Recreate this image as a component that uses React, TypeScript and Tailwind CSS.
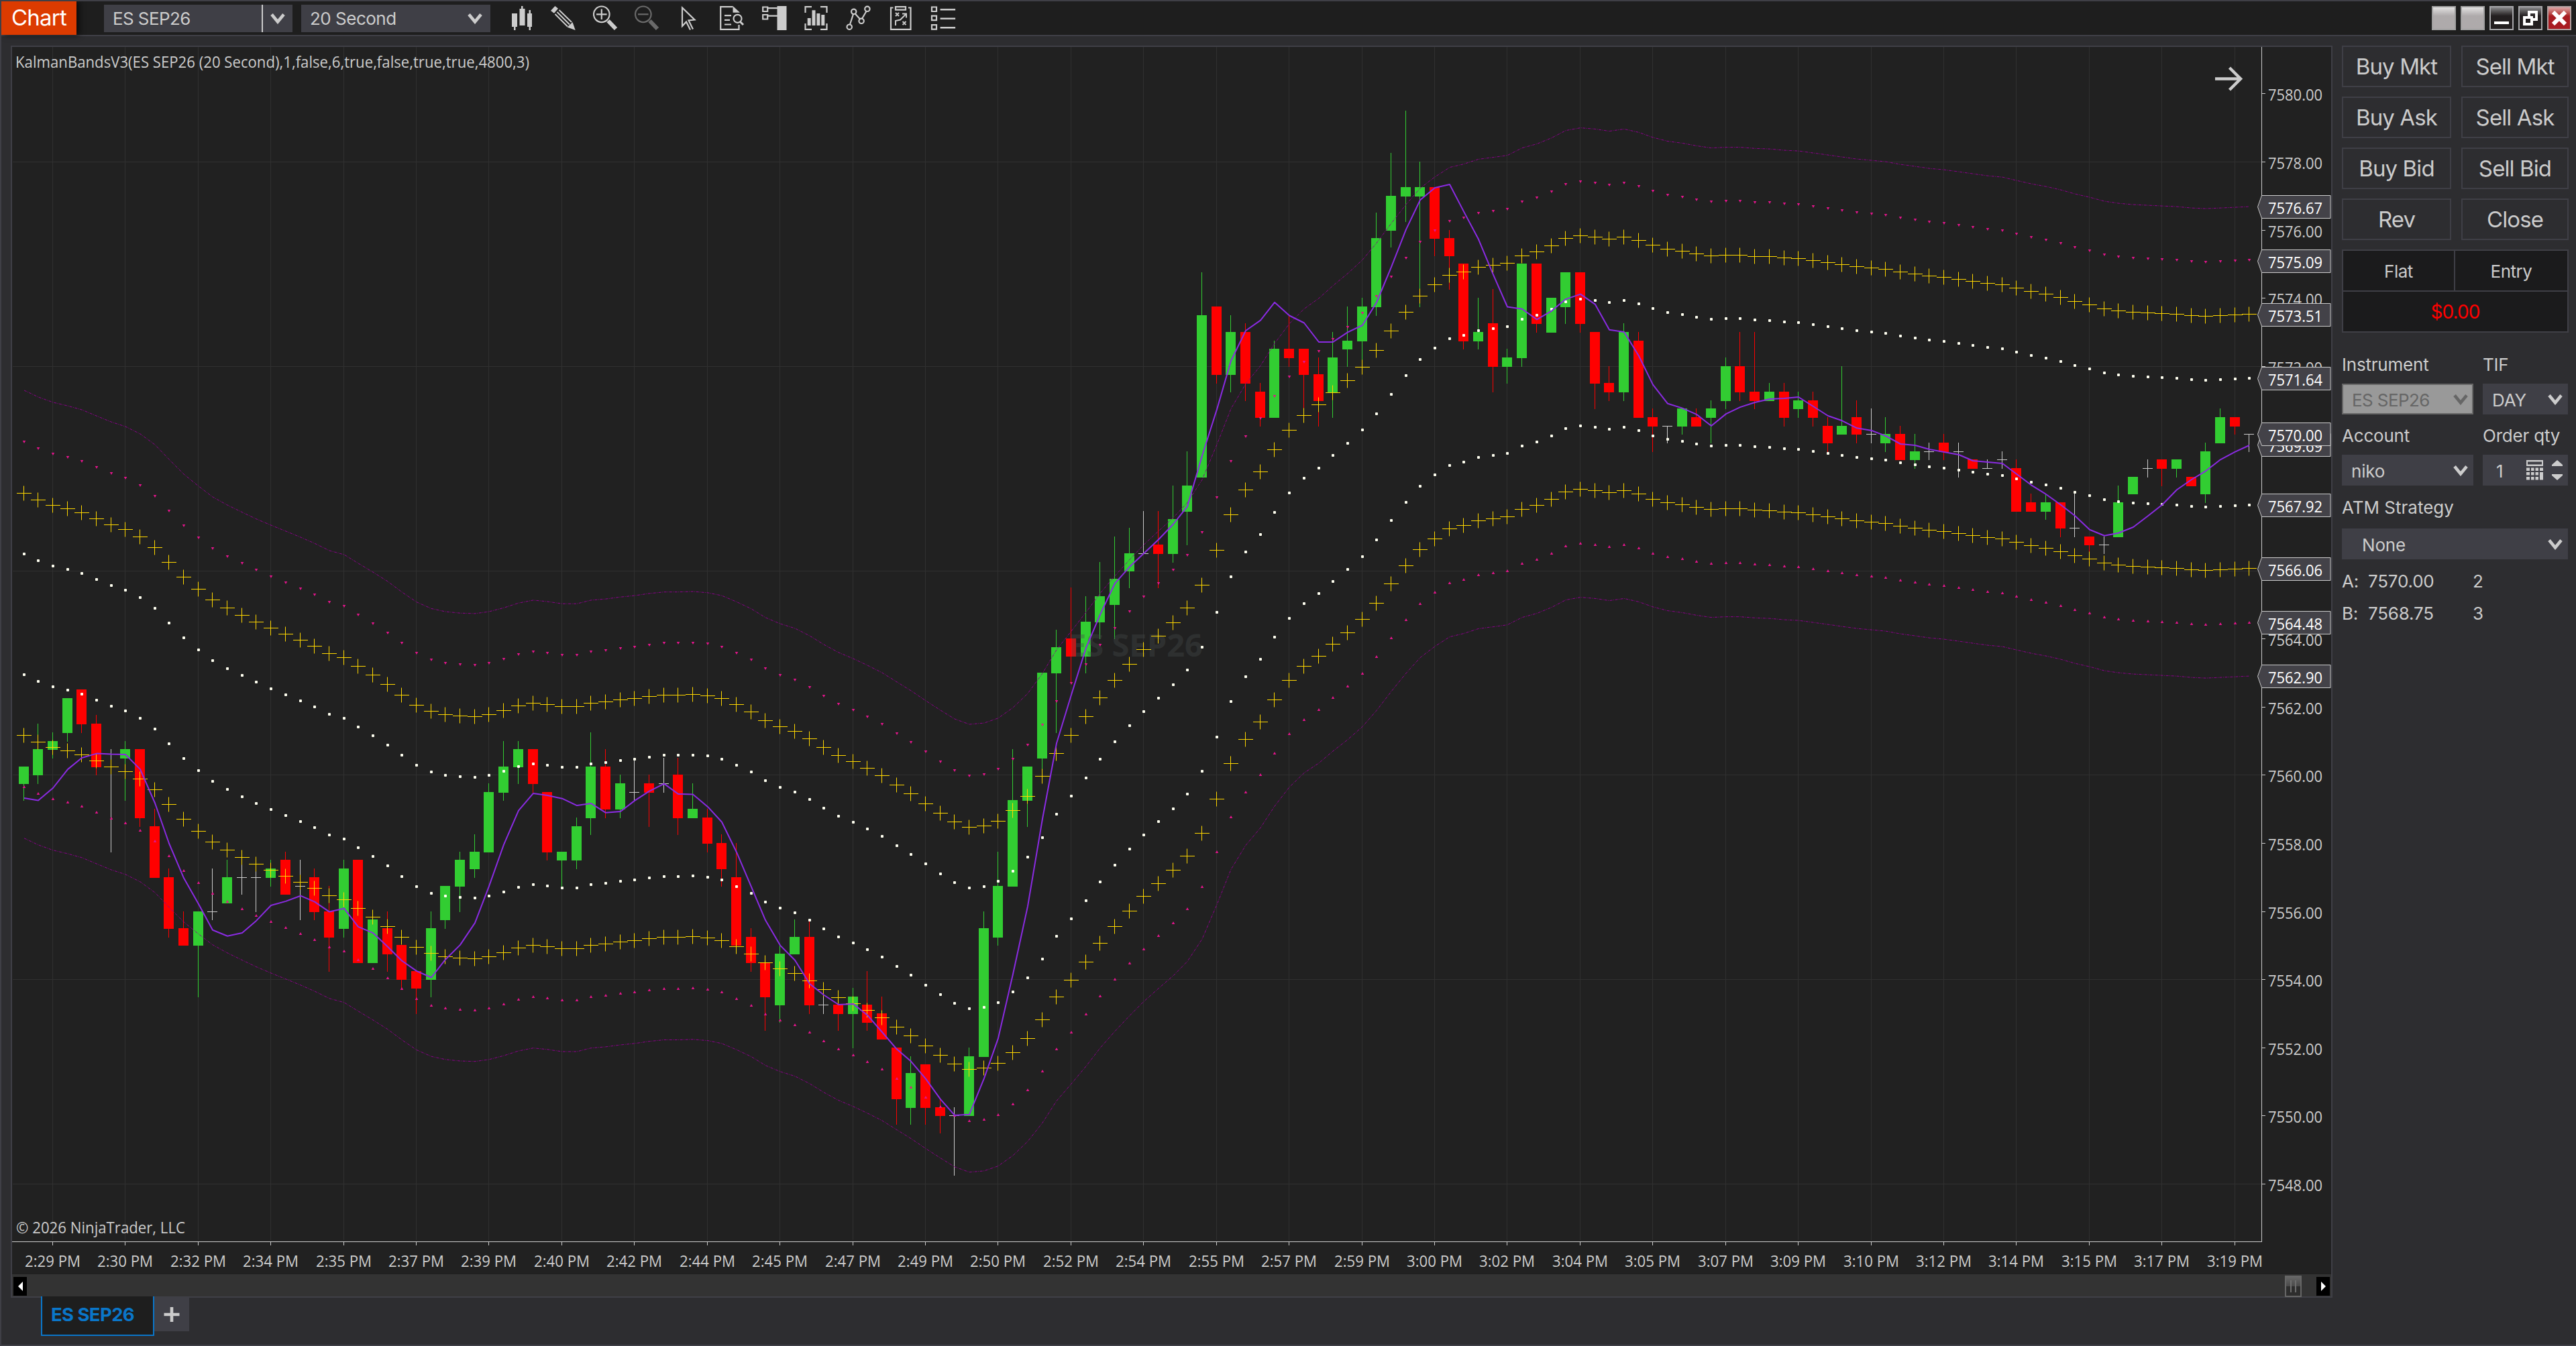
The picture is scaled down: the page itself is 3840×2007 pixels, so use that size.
import React from 'react';

// [direction, body top, body bottom, high, low] in ticks above 7548.00, one tick is 0.25
type Bar = [number, number, number, number, number];

const BARS: Bar[] = [
  [1, 49, 47, 49, 45], [1, 51, 48, 54, 47], [1, 52, 51, 53, 50], [1, 57, 53, 57, 52], [-1, 58, 54, 58, 53],
  [-1, 54, 49, 55, 48], [0, 49, 49, 51, 39], [1, 51, 50, 52, 45], [-1, 51, 43, 51, 42], [-1, 42, 36, 44, 36],
  [-1, 36, 30, 37, 29], [-1, 30, 28, 32, 28], [1, 32, 28, 32, 22], [0, 32, 32, 37, 31], [1, 36, 33, 38, 33],
  [0, 36, 36, 38, 34], [0, 36, 36, 38, 32], [1, 37, 36, 38, 35], [-1, 38, 34, 39, 34], [0, 35, 35, 38, 31],
  [-1, 36, 32, 37, 31], [-1, 32, 29, 35, 25], [1, 37, 30, 38, 29], [-1, 38, 26, 38, 26], [1, 31, 26, 31, 26],
  [-1, 30, 27, 32, 25], [-1, 28, 24, 28, 23], [-1, 25, 23, 25, 20], [1, 30, 24, 32, 22], [1, 35, 31, 35, 30],
  [1, 38, 35, 39, 32], [1, 39, 37, 41, 36], [1, 46, 39, 47, 39], [1, 49, 46, 52, 45], [1, 51, 49, 52, 47],
  [-1, 51, 47, 51, 46], [-1, 46, 39, 46, 38], [1, 39, 38, 39, 35], [1, 42, 38, 43, 37], [1, 49, 43, 53, 41],
  [-1, 49, 44, 51, 43], [1, 47, 44, 48, 43], [0, 46, 46, 50, 45], [-1, 47, 46, 48, 42], [0, 47, 47, 50, 46],
  [-1, 48, 43, 50, 41], [1, 44, 43, 47, 43], [-1, 43, 40, 44, 39], [-1, 40, 37, 41, 35], [-1, 36, 28, 40, 28],
  [-1, 29, 26, 30, 25], [-1, 26, 22, 26, 18], [1, 27, 21, 28, 19], [1, 29, 27, 31, 27], [-1, 29, 21, 31, 20],
  [0, 21, 21, 23, 20], [-1, 21, 20, 21, 18], [1, 22, 20, 23, 16], [-1, 21, 19, 25, 18], [-1, 20, 17, 22, 17],
  [-1, 16, 10, 16, 7], [1, 13, 9, 15, 7], [-1, 14, 9, 14, 7], [-1, 9, 8, 10, 6], [0, 8, 8, 9, 1],
  [1, 15, 8, 16, 8], [1, 30, 15, 32, 15], [1, 35, 29, 39, 28], [1, 45, 35, 51, 35], [1, 49, 45, 49, 42],
  [1, 60, 50, 60, 48], [1, 63, 60, 65, 53], [-1, 64, 62, 70, 59], [1, 66, 62, 69, 60], [1, 69, 66, 73, 64],
  [1, 71, 68, 76, 64], [1, 74, 72, 77, 70], [0, 74, 74, 79, 74], [-1, 75, 74, 79, 70], [1, 78, 74, 82, 73],
  [1, 82, 79, 86, 75], [1, 102, 83, 107, 83], [-1, 103, 95, 103, 94], [1, 100, 95, 102, 93], [-1, 100, 94, 101, 92],
  [-1, 93, 90, 94, 89], [1, 98, 90, 99, 90], [-1, 98, 97, 102, 96], [-1, 98, 95, 98, 91], [-1, 95, 92, 97, 89],
  [1, 97, 93, 100, 90], [1, 99, 98, 103, 96], [1, 103, 99, 104, 96], [1, 111, 103, 114, 102], [1, 116, 112, 121, 110],
  [1, 117, 116, 126, 113], [1, 117, 116, 120, 103], [-1, 117, 111, 117, 109], [-1, 111, 109, 112, 105], [-1, 108, 99, 108, 98],
  [1, 100, 99, 104, 98], [-1, 101, 96, 105, 93], [1, 97, 96, 98, 94], [1, 108, 97, 108, 96], [-1, 108, 101, 108, 100],
  [1, 104, 100, 104, 100], [1, 107, 103, 107, 101], [-1, 107, 101, 107, 100], [-1, 100, 94, 100, 91], [-1, 94, 93, 96, 92],
  [1, 100, 93, 101, 92], [-1, 99, 90, 100, 90], [-1, 90, 89, 91, 86], [0, 89, 89, 89, 87], [1, 91, 89, 91, 88],
  [-1, 90, 89, 91, 89], [1, 91, 90, 92, 87], [1, 96, 92, 97, 91], [-1, 96, 93, 100, 92], [-1, 93, 92, 100, 91],
  [1, 93, 92, 94, 92], [-1, 93, 90, 94, 89], [1, 92, 91, 93, 90], [-1, 92, 90, 93, 89], [-1, 89, 87, 90, 86],
  [1, 89, 88, 96, 88], [-1, 90, 88, 92, 87], [0, 88, 88, 91, 87], [1, 88, 87, 90, 86], [-1, 88, 85, 89, 85],
  [1, 86, 85, 88, 84], [0, 86, 86, 87, 85], [-1, 87, 86, 88, 85], [0, 86, 86, 87, 83], [-1, 85, 84, 85, 84],
  [0, 84, 84, 85, 84], [0, 85, 85, 86, 84], [-1, 84, 79, 85, 79], [-1, 80, 79, 81, 79], [1, 80, 79, 81, 78],
  [-1, 80, 77, 80, 76], [0, 77, 77, 81, 76], [-1, 76, 75, 76, 74], [0, 75, 75, 76, 74], [1, 80, 76, 82, 76],
  [1, 83, 81, 83, 81], [0, 84, 84, 85, 83], [-1, 85, 84, 85, 82], [1, 85, 84, 85, 83], [-1, 83, 82, 83, 82],
  [1, 86, 81, 87, 80], [1, 90, 87, 91, 87], [-1, 90, 89, 90, 88], [0, 88, 88, 88, 86],
];

// center of the bands, in chart pixels
const MID = [
  915.9, 925.9, 933.8, 939.1, 944.9, 954.1, 963.1, 969.9, 980.9, 997, 1018.8, 1040.9, 1058.8, 1074.9, 1087,
  1097.7, 1107.7, 1117, 1125.9, 1134.9, 1144.1, 1154.9, 1160.9, 1173.8, 1187, 1200.9, 1216.6, 1231.6, 1241.3, 1245.9,
  1248.1, 1248.8, 1245.9, 1240.2, 1233.1, 1228.8, 1230.9, 1234.1, 1234.1, 1228.8, 1227, 1224.1, 1222, 1218.8, 1216.6,
  1216.6, 1215.9, 1217.7, 1222, 1231.3, 1241.7, 1254.7, 1263.9, 1270.8, 1281.9, 1294.9, 1306.8, 1316, 1325.9, 1337,
  1350.8, 1363.8, 1378.7, 1392.9, 1405.9, 1413.9, 1412, 1404.7, 1389.1, 1368, 1339.1, 1305.2, 1278.6, 1251.3, 1223.6,
  1198.2, 1174.4, 1152.8, 1132.8, 1113.3, 1091.5, 1057.7, 1005.8, 952.9, 916.4, 889.8, 857.1, 828.2, 806.5, 791.3,
  773, 755.3, 735.5, 710.9, 681.9, 654.4, 630.6, 613.8, 599.6, 594.6, 587.4, 584.6, 581.7, 570.6, 564.6,
  555.6, 544.6, 540.6, 542.4, 545.6, 542.4, 547.4, 554.9, 560.6, 563.5, 567.4, 570.6, 569.6, 569.6, 571.3,
  572.1, 574.1, 575.1, 578.1, 581.1, 584.1, 587.1, 589.1, 591.1, 595.1, 598.1, 601.1, 603.1, 606.1, 609.1,
  612.1, 614.1, 619.1, 624.1, 628.1, 633.1, 639.1, 644.1, 650.1, 653.1, 655.1, 656.1, 657.1, 658.1, 660.1,
  661.1, 660.1, 659.1, 658.1,
];

const KALMAN = [
  1190, 1193.6, 1175, 1147.1, 1130, 1123.6, 1124.6, 1125, 1147.1, 1197.5, 1257.5, 1309.3, 1347.9, 1386.8, 1395.7,
  1391.1, 1372.9, 1350, 1343.9, 1335.7, 1344.6, 1359.6, 1354.6, 1381.8, 1391.1, 1411.8, 1432.5, 1447.9, 1457.5, 1430.7,
  1408.9, 1376.1, 1321.4, 1259.3, 1208.6, 1182.9, 1186.1, 1190.7, 1201.1, 1197.9, 1211.8, 1210, 1193.9, 1179.6, 1168.6,
  1183.9, 1184.6, 1202.9, 1225.7, 1270.7, 1322.4, 1372.1, 1409.6, 1431.8, 1467, 1483.5, 1498, 1496.9, 1513.7, 1539,
  1564.6, 1582.6, 1608.6, 1639.2, 1662.9, 1661.8, 1607.8, 1548.1, 1452.5, 1351.4, 1221, 1108.3, 1036, 965.8, 916.4,
  869.8, 845.1, 825.3, 804.5, 781.5, 755.1, 679.5, 610.4, 538, 493, 477.6, 450.8, 470.5, 481.5, 510,
  510, 495.4, 485, 451, 398.2, 342.1, 298.2, 280, 275, 315.4, 356.8, 409.6, 457.5, 460.7, 476.4,
  463.6, 446.1, 438.6, 453.9, 491.8, 495, 530.7, 573.6, 601.8, 608.6, 617.9, 635, 617.1, 607.1, 600,
  595, 594, 592, 606, 620, 627.3, 638.3, 642, 650, 662, 664, 670, 674, 678, 687,
  689, 691, 706.7, 723.3, 737, 752.7, 769, 789.7, 798.7, 794.7, 786, 769.3, 752.7, 730.3, 715,
  702.3, 685.3, 673.7, 664,
];

const TIMES = [
  '2:29', '2:30', '2:32', '2:34', '2:35', '2:37', '2:39', '2:40', '2:42', '2:44', '2:45',
  '2:47', '2:49', '2:50', '2:52', '2:54', '2:55', '2:57', '2:59', '3:00', '3:02', '3:04',
  '3:05', '3:07', '3:09', '3:10', '3:12', '3:14', '3:15', '3:17', '3:19',
].map((t) => `${t} PM`);

const PRICES = Array.from({ length: 17 }, (_, i) => 7580 - i * 2);
const TAGS = [7576.67, 7575.09, 7573.51, 7571.64, 7569.69, 7570.0, 7567.92, 7566.06, 7564.48, 7562.9];

const AXIS_X = 3371;
const AXIS_Y = 1851;

const barX = (i: number) => Math.floor(35 + 21.686 * i);
const priceY = (p: number) => Math.floor(241.4 + (7578 - p) * 50.805);
const tickY = (t: number) => priceY(7548 + t / 4);

const sigma = (i: number) => {
  if (i < 70) return 90.25;
  if (i < 73) return 90.25 + (i - 69) * 0.32;
  if (i < 96) return 91.5 + (i - 73) * 0.135;
  return 94.6;
};

const band = (k: number) => MID.map((m, i) => m + k * sigma(i));
const linePath = (ys: number[]) => ys.map((y, i) => `${i ? 'L' : 'M'}${barX(i) + 1} ${y.toFixed(1)}`).join('');

const Candle: React.FC<{ bar: Bar; i: number }> = ({ bar, i }) => {
  const [dir, top, bottom, high, low] = bar;
  const x = barX(i);
  const fill = dir > 0 ? '#32cd32' : dir < 0 ? '#ff0000' : '#cccccc';
  return <g fill={fill}>
      <rect x={x} y={tickY(high)} width={1} height={tickY(low) - tickY(high) + 1} />
      <rect x={x - 7} y={tickY(top)} width={15} height={tickY(bottom) - tickY(top) + 1} />
    </g>;
};

const Crosses: React.FC<{ k: number }> = ({ k }) => <path
    stroke="#ffd700"
    strokeWidth={1}
    fill="none"
    d={band(k).map((v, i) => {
      const x = barX(i) + 0.5;
      const y = Math.floor(v) + 0.5;
      return `M${x - 10.5} ${y}h22M${x} ${y - 11}v22`;
    }).join('')}
  />;

const Dots: React.FC<{ k: number }> = ({ k }) => <g fill="#fffff0">
    {band(k).map((v, i) => <rect key={i} x={barX(i) - 1} y={Math.round(v) - 2} width={4} height={4} rx={1} />)}
  </g>;

const Triangles: React.FC<{ k: number }> = ({ k }) => <path
    fill="#e0158a"
    d={band(k).map((v, i) => {
      const x = barX(i) + 1;
      const y = Math.round(v);
      return k < 0 ? `M${x} ${y + 2}l2.3 -4h-4.6z` : `M${x} ${y - 2}l2.3 4h-4.6z`;
    }).join('')}
  />;

const PriceTag: React.FC<{ price: number }> = ({ price }) => {
  const y = priceY(price) + 0.5;
  return <g>
      <path d={`M3365.5 ${y}L3371.5 ${y - 17}H3474V${y + 17}H3371.5Z`} fill="#434248" stroke="#cccccc" />
      <text x={3381} y={y + 10} fill="#ffffff" textLength={81} lengthAdjust="spacingAndGlyphs">
        {price.toFixed(2)}
      </text>
    </g>;
};

const Chart = () => {
  return <svg viewBox="18 70 3457 1829" className="block w-[3457px] h-[1829px] font-['Open_Sans',sans-serif] text-[23.5px]">
      <g fill="#303030">
        {TIMES.map((t, i) => <rect key={t} x={barX(2 + i * 5)} y={70} width={1} height={1779} />)}
        {[7578, 7572, 7566, 7560, 7554, 7548].map((p) => <rect key={p} x={19} y={priceY(p)} width={3351} height={1} />)}
      </g>
      {BARS.map((bar, i) => <Candle key={i} bar={bar} i={i} />)}
      <text x={1593} y={979} fill="#454b4b" fillOpacity={0.4} fontSize={47} fontWeight={700} textLength={200} lengthAdjust="spacingAndGlyphs">
        ES SEP26
      </text>
      <path d={linePath(band(-3.7))} stroke="#8b008b" strokeWidth={1} strokeDasharray="4 1.5 1 1.5" fill="none" />
      <path d={linePath(band(3.7))} stroke="#8b008b" strokeWidth={1} strokeDasharray="4 1.5 1 1.5" fill="none" />
      <Triangles k={-2.85} />
      <Triangles k={2.85} />
      <Crosses k={-2} />
      <Crosses k={2} />
      <Dots k={-1} />
      <Dots k={1} />
      <path d={linePath(KALMAN)} stroke="#8a2be2" strokeWidth={2} strokeLinejoin="round" fill="none" />

      <text x={23} y={101} fill="#cccccc" textLength={766} lengthAdjust="spacingAndGlyphs">
        KalmanBandsV3(ES SEP26 (20 Second),1,false,6,true,false,true,true,4800,3)
      </text>
      <text x={24} y={1838.5} fill="#cccccc" textLength={252} lengthAdjust="spacingAndGlyphs">
        © 2026 NinjaTrader, LLC
      </text>
      <path d="M3302 117.5H3340M3323.5 101L3340 117.5L3323.5 134" stroke="#cccccc" strokeWidth={4.5} fill="none" />

      {/* Axes */}
      <g fill="#cccccc">
        <rect x={AXIS_X} y={70} width={1} height={AXIS_Y - 70} />
        <rect x={18} y={AXIS_Y} width={AXIS_X - 17} height={1} />
        {TIMES.map((t, i) => <g key={t}>
            <rect x={barX(2 + i * 5)} y={AXIS_Y} width={1} height={6} />
            <text x={barX(2 + i * 5) - 41} y={1889} textLength={83} lengthAdjust="spacingAndGlyphs">{t}</text>
          </g>)}
        {PRICES.map((p) => <g key={p}>
            <rect x={AXIS_X} y={priceY(p)} width={6} height={1} />
            <text x={3381} y={priceY(p) + 10.5} textLength={81} lengthAdjust="spacingAndGlyphs">{p.toFixed(2)}</text>
          </g>)}
      </g>
      {TAGS.map((p) => <PriceTag key={p} price={p} />)}
    </svg>;
};

const Chevron: React.FC<{ className?: string }> = ({ className = 'text-[#cccccc]' }) => <svg width="22" height="17" viewBox="0 0 22 17" className={className}>
    <path d="M2 2.5L11 13.5L20 2.5" stroke="currentColor" strokeWidth="4.6" fill="none" />
  </svg>;

const TOOLS: React.ReactNode[] = [
  <g fill="currentColor" stroke="none">
    <path d="M5 13h8v20h-8zM16.5 6h8v25h-8zM28 13h7v20h-7zM8 33h2.5v5h-2.5zM19 2h2.5v4h-2.5zM30.5 8h2.5v5h-2.5zM30.5 33h2.5v5h-2.5z" />
  </g>,
  <g>
    <path d="M0 9L6.4 2L11 5.7L5 12.7ZM36.7 38L24.5 33.5L32.5 26Z" fill="currentColor" stroke="none" />
    <path d="M12.5 8L31 26M9.5 11L28 29.5M6.5 14L25 32.5" strokeWidth="2" />
  </g>,
  <g>
    <circle cx="12.8" cy="14.3" r="11.8" />
    <path d="M5 14.3h15.6M12.8 6.5v15.6" />
    <path d="M22.5 24L34 36" strokeWidth="6" />
  </g>,
  <g className="text-[#6a6a6a]" stroke="currentColor">
    <circle cx="12.8" cy="14.3" r="11.8" />
    <path d="M5 14.3h15.6" />
    <path d="M22.5 24L34 36" strokeWidth="6" />
  </g>,
  <g>
    <path d="M20 37.5L14 25.5L8 32V4.5L26.5 22.5L17.5 23.5L24 36.5" />
  </g>,
  <g>
    <path d="M20.5 3.2H2.2V36.8H29.5V30" />
    <path d="M20.5 2L31 11.7H20.5Z" fill="currentColor" stroke="none" />
    <path d="M8 16.2h10M8 22.8h8M8 29.5h10" />
    <circle cx="27.5" cy="20.8" r="6" />
    <path d="M31.5 25.5L36 30" strokeWidth="3" />
  </g>,
  <g>
    <path d="M2.2 3.5h7v6.5h-7zM2.2 15h7v6.5h-7zM9 5.2h15M9 16.7h15" />
    <path d="M23.5 2h14v36h-14z" fill="currentColor" stroke="none" />
  </g>,
  <g>
    <path d="M2.5 12V3.2H12M25 3.2H34.5V12M2.5 28V36.8H12M25 36.8H34.5V28" />
    <path d="M5.7 20h5v11h-5zM12.5 8.3h5v22.7h-5zM19.4 13h5v18h-5zM26.3 15h5v16h-5z" fill="currentColor" stroke="none" />
  </g>,
  <g>
    <path d="M7 29.5L12 14M14.8 13.5L22 21.5M25.2 20.5L31.5 9.8" />
    <circle cx="6.2" cy="33.2" r="3.7" />
    <circle cx="12.7" cy="10.3" r="3.7" />
    <circle cx="24.1" cy="24.3" r="3.7" />
    <circle cx="32.9" cy="6.3" r="3.7" />
  </g>,
  <g>
    <path d="M8.5 4.5H5V36.8H34.5V4.5H31M12 3.2h15v4.5h-15z" />
    <path d="M12 12l5 5M17 12l-5 5M22.5 25l5 5M27.5 25l-5 5M12 31V24L19 22.5L28 13.5M22 13.5H28V19.5" strokeWidth="2" />
  </g>,
  <g>
    <path d="M3 3.5h7v6.5h-7zM3 16.7h7v6.5h-7zM3 30.2h7v6.5h-7z" />
    <path d="M15.6 7.3h22.5M15.6 20.7h22.5M15.6 34.3h22.5" strokeWidth="2.5" />
  </g>,
];

const Toolbar = () => {
  return <div className="flex gap-[22.8px] ml-[27px]">
      {TOOLS.map((tool, i) => <svg key={i} width="40" height="40" viewBox="0 0 40 40" fill="none" stroke="currentColor" strokeWidth="2.2" className="text-[#cccccc]">
          {tool}
        </svg>)}
    </div>;
};

const WindowButtons = () => {
  const dark = 'w-9 h-9 border-2 border-[#a5a5a8] bg-linear-to-b from-[#8a8a8c] via-[#231f20] via-40% to-[#231f20] flex items-center justify-center';
  const blank = 'w-9 h-9 border-2 border-[#a0a0a0] bg-linear-to-b from-[#e2e1e1] to-[#aeaaab] to-40%';
  return <div className="ml-auto mr-[7px] flex gap-[7px]">
      <div className={blank}></div>
      <div className={blank}></div>
      <div className={dark}>
        <div className="w-[22px] h-1 mt-3.5 bg-white"></div>
      </div>
      <div className={dark}>
        <svg width="22" height="22" viewBox="0 0 22 22" fill="none" stroke="white" strokeWidth="4">
          <path d="M2 10h11v10h-11z" />
          <path d="M9 8V2h11v11h-6" />
        </svg>
      </div>
      <div className="w-9 h-9 border-2 border-[#b0a0a0] bg-linear-to-b from-[#dba3a5] via-[#a91d22] via-40% to-[#a91d22] flex items-center justify-center">
        <svg width="22" height="22" viewBox="0 0 22 22" stroke="white" strokeWidth="6">
          <path d="M2 2L20 20M20 2L2 20" />
        </svg>
      </div>
    </div>;
};

const Header = () => {
  return <header className="h-[52px] shrink-0 flex items-center bg-[#1e1e1e] border-b-2 border-[#3f3f46]">
      <div className="w-28 h-[50px] flex items-center justify-center bg-[#dc3b00] text-white text-[33px] tracking-[-0.8px] shadow-[4px_0_8px_#0a0a0a]">
        Chart
      </div>
      <div className="ml-[41px] w-[281px] h-[41px] flex items-center bg-[#3f3f46]">
        <span className="flex-1 pl-[13px] text-[26px] tracking-[-0.6px]">ES SEP26</span>
        <div className="w-0.5 h-full bg-[#cccccc]"></div>
        <div className="w-11 flex justify-center"><Chevron /></div>
      </div>
      <div className="ml-[13px] w-[282px] h-[41px] pl-[13px] pr-3 flex items-center justify-between bg-[#3f3f46]">
        <span className="text-[26px] tracking-[-0.5px]">20 Second</span>
        <Chevron />
      </div>
      <Toolbar />
      <WindowButtons />
    </header>;
};

const ScrollBar = () => {
  return <div className="h-[34px] px-0.5 pt-[2px] border-t border-[#1e1e1e] bg-[#333333] flex items-center">
      <div className="w-5 h-7 bg-black flex items-center justify-center">
        <svg width="7" height="14" viewBox="0 0 7 14"><path d="M7 0V14L0 7Z" fill="white" /></svg>
      </div>
      <div className="ml-auto mr-[22px] w-[25px] h-8 border-2 border-[#666666] bg-linear-to-b from-[#666666] from-0% via-[#4a4a4a] via-50% to-[#2d2d2d] to-50% flex items-center justify-center gap-[5px]">
        <div className="w-0.5 h-[18px] bg-[#6e6e6e]"></div>
        <div className="w-0.5 h-[18px] bg-[#6e6e6e]"></div>
      </div>
      <div className="w-5 h-7 bg-black flex items-center justify-center">
        <svg width="7" height="14" viewBox="0 0 7 14"><path d="M0 0V14L7 7Z" fill="white" /></svg>
      </div>
    </div>;
};

const Tabs = () => {
  return <div className="flex items-start ml-[45px] -mt-0.5">
      <div className="w-[169px] h-[59px] pb-0.5 pl-[13px] flex items-center bg-[#1e1e1e] border-2 border-t-0 border-[#0a76c9] text-[#0a76c9] text-[27.5px] font-bold tracking-[-0.6px]">
        ES SEP26
      </div>
      <div className="mt-0.5 w-[52px] h-[50px] flex items-center justify-center bg-[#3f3f46]">
        <svg width="24" height="24" viewBox="0 0 24 24" stroke="#cccccc" strokeWidth="4.6">
          <path d="M0.5 12H23.5M12 1V23" />
        </svg>
      </div>
    </div>;
};

const Select: React.FC<{ label: string; className: string }> = ({ label, className }) => {
  return <div className={`h-[46px] pr-2 flex items-center justify-between bg-[#3f3f46] ${className}`}>
      <span className="pt-0.5">{label}</span>
      <Chevron />
    </div>;
};

const OrderPanel = () => {
  return <aside className="ml-[14px] w-[338px] text-[26px] tracking-[-0.2px]">
      <div className="grid grid-cols-[163px_160px] gap-x-[15px] gap-y-[14px] text-[33px] tracking-[-0.9px]">
        {['Buy Mkt', 'Sell Mkt', 'Buy Ask', 'Sell Ask', 'Buy Bid', 'Sell Bid', 'Rev', 'Close'].map((label) => <button key={label} className="h-[62px] pt-0.5 border-2 border-[#3f3f46]">
            {label}
          </button>)}
      </div>
      <div className="mt-[14px] h-[124px] border-2 border-[#3f3f46] bg-[#1b1b1c] text-center tracking-[-0.5px]">
        <div className="h-[61px] flex border-b-2 border-[#3f3f46] leading-[61px]">
          <div className="w-[167px] border-r-2 border-[#3f3f46]">Flat</div>
          <div className="flex-1">Entry</div>
        </div>
        <div className="leading-[60px] text-[28px] tracking-[-0.9px] text-[#ff0000]">$0.00</div>
      </div>

      <div className="mt-[28px] flex leading-10">
        <span className="w-[210px]">Instrument</span>
        <span>TIF</span>
      </div>
      <div className="mt-[8px] flex gap-[14px]">
        <div className="w-[196px] h-[46px] pl-[13px] pr-1.5 flex items-center justify-between border-2 border-[#666666] bg-[#999999] text-[#666666]">
          <span className="pt-0.5 tracking-[-0.6px]">ES SEP26</span>
          <Chevron className="text-[#666666]" />
        </div>
        <Select label="DAY" className="w-[127px] pl-[14px]" />
      </div>

      <div className="mt-[12px] flex leading-10">
        <span className="w-[210px]">Account</span>
        <span>Order qty</span>
      </div>
      <div className="mt-[8px] flex gap-[14px]">
        <Select label="niko" className="w-[196px] pl-[14px]" />
        <div className="w-[127px] h-[46px] pl-[20px] pr-2 flex items-center bg-[#3f3f46]">
          <span className="flex-1 pt-0.5">1</span>
          <svg width="26" height="30" viewBox="0 0 26 30" fill="#cccccc" className="mr-3">
            <path d="M0 0h25v9h-25zM2 2.5v4h21v-4z" fillRule="evenodd" />
            <path d="M0 11.5h5v4.5h-5zM7 11.5h4.5v4.5h-4.5zM13.5 11.5h4.5v4.5h-4.5zM20 11.5h5v4.5h-5zM0 18h5v4.5h-5zM7 18h4.5v4.5h-4.5zM13.5 18h4.5v4.5h-4.5zM20 18h5v11.5h-5zM0 25h5v4.5h-5zM7 25h4.5v4.5h-4.5zM13.5 25h4.5v4.5h-4.5z" />
          </svg>
          <svg width="16" height="30" viewBox="0 0 16 30" fill="#cccccc">
            <path d="M8 0L16 7V9H0V7ZM8 30L16 23V21H0V23Z" />
          </svg>
        </div>
      </div>

      <div className="mt-[13px] leading-10 tracking-normal">ATM Strategy</div>
      <Select label="None" className="mt-[11px] w-[337px] pl-[30px]" />

      <div className="mt-[9px] grid grid-cols-[39px_156px_1fr] leading-12">
        <span>A:</span><span>7570.00</span><span>2</span>
        <span>B:</span><span>7568.75</span><span>3</span>
      </div>
    </aside>;
};

export default function App() {
  return <div className="h-[2007px] flex flex-col overflow-hidden bg-[#2d2d30] border-t-2 border-l-2 border-b-2 border-[#3f3f46] text-[#cccccc] font-['Inter',sans-serif]">
      <Header />
      <main className="flex pt-[14px] pl-[14px]">
        <div>
          <div className="w-[3461px] border-2 border-[#3f3f46] bg-[#212121]">
            <Chart />
            <ScrollBar />
          </div>
          <Tabs />
        </div>
        <OrderPanel />
      </main>
    </div>;
}
